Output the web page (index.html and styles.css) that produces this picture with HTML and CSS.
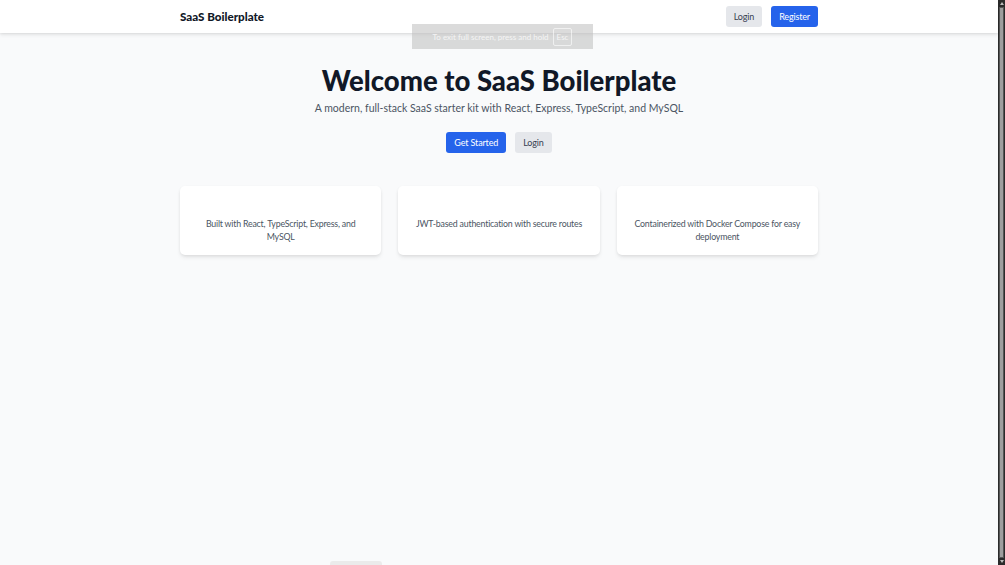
FILE: index.html
```html
<!DOCTYPE html>
<html lang="en">
<head>
<meta charset="utf-8">
<title>SaaS Boilerplate</title>
<link rel="stylesheet" href="styles.css">
</head>
<body>
<div class="viewport">
  <header class="nav">
    <div class="container nav-inner">
      <div class="brand">SaaS Boilerplate</div>
      <div class="nav-actions">
        <a class="btn btn-gray">Login</a>
        <a class="btn btn-blue">Register</a>
      </div>
    </div>
  </header>
  <main class="container hero">
    <h1 class="title">Welcome to SaaS Boilerplate</h1>
    <p class="subtitle">A modern, full-stack SaaS starter kit with React, Express, TypeScript, and MySQL</p>
    <div class="hero-actions">
      <a class="btn btn-blue">Get Started</a>
      <a class="btn btn-gray">Login</a>
    </div>
    <div class="cards">
      <div class="card"><div class="card-title"></div><p>Built with React, TypeScript, Express, and MySQL</p></div>
      <div class="card"><div class="card-title"></div><p>JWT-based authentication with secure routes</p></div>
      <div class="card"><div class="card-title"></div><p>Containerized with Docker Compose for easy deployment</p></div>
    </div>
  </main>
  <div class="fs-toast">To exit full screen, press and hold <span class="key">Esc</span></div>
  <div class="bottom-peek"></div>
</div>
<div class="scrollbar"><div class="arrow up"></div><div class="thumb"></div><div class="arrow down"></div></div>
</body>
</html>
```

FILE: styles.css
```css
* { box-sizing: border-box; }
html, body { margin: 0; height: 100%; }
body {
  display: flex;
  font-family: Lato, "Noto Sans", sans-serif;
  background: #f9fafb;
  overflow: hidden;
}
.viewport {
  flex: 1;
  position: relative;
  height: 565px;
  background: #f9fafb;
}
.container {
  width: 638px;
  margin: 0 auto;
}
.nav {
  height: 33px;
  background: #fff;
  box-shadow: 0 2px 4px rgba(0,0,0,0.08), 0 1px 2px rgba(0,0,0,0.06);
  position: relative;
  z-index: 1;
}
.nav-inner {
  height: 100%;
  display: flex;
  align-items: center;
  justify-content: space-between;
}
.brand {
  font-size: 11.6px;
  font-weight: 900;
  color: #111827;
}
.nav-actions { display: flex; gap: 9px; }
.btn {
  display: inline-flex;
  align-items: center;
  justify-content: center;
  height: 21px;
  padding: 0 8px;
  border-radius: 3px;
  font-size: 9px;
  letter-spacing: -0.15px;
  line-height: 1;
  cursor: pointer;
}
.btn-gray { background: #e5e7eb; color: #374151; }
.btn-blue { background: #2563eb; color: #fff; }
.hero {
  display: flex;
  flex-direction: column;
  align-items: center;
  padding-top: 31px;
}
.title {
  margin: 0;
  font-size: 27.5px;
  line-height: 34px;
  font-weight: 900;
  color: #111827;
}
.subtitle {
  margin: 1px 0 0;
  font-size: 10.5px;
  line-height: 18px;
  color: #4b5563;
}
.hero-actions {
  display: flex;
  gap: 9px;
  margin-top: 15px;
}
.cards {
  align-self: stretch;
  display: grid;
  grid-template-columns: repeat(3, 1fr);
  gap: 17px;
  margin-top: 33px;
}
.card {
  background: #fff;
  border-radius: 5px;
  box-shadow: 0 3px 5px -1px rgba(0,0,0,0.09), 0 1px 3px rgba(0,0,0,0.06);
  padding: 12px 16px 12px;
  text-align: center;
}
.card-title { height: 19px; }
.card p {
  margin: 0;
  font-size: 8.8px;
  letter-spacing: -0.2px;
  line-height: 13px;
  color: #4b5563;
}
.fs-toast {
  position: absolute;
  left: 412px;
  top: 24px;
  width: 181px;
  height: 25px;
  background: rgba(190,190,190,0.55);
  color: rgba(255,255,255,0.75);
  font-size: 8px;
  display: flex;
  align-items: center;
  justify-content: center;
  gap: 4px;
  z-index: 2;
}
.key {
  border: 1px solid rgba(255,255,255,0.6);
  border-radius: 2px;
  padding: 3px 3px;
  font-size: 8px;
}
.bottom-peek {
  position: absolute;
  left: 330px;
  top: 561px;
  width: 52px;
  height: 10px;
  border-radius: 3px;
  background: #ebebeb;
}
.scrollbar {
  width: 7px;
  height: 565px;
  background: #2b2b2b;
  display: flex;
  flex-direction: column;
  align-items: center;
  padding: 2px 1px;
}
.arrow {
  width: 0; height: 0;
  border-left: 2px solid transparent;
  border-right: 2px solid transparent;
}
.arrow.up { border-bottom: 3px solid #bbb; margin-bottom: 2px; }
.arrow.down { border-top: 3px solid #bbb; margin-top: 2px; }
.thumb {
  flex: 1;
  width: 5px;
  background: #9e9e9e;
  border: 1px solid #555;
}
```
